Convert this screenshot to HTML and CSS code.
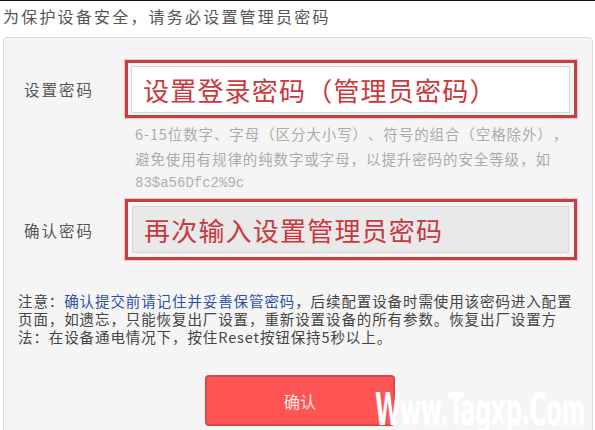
FILE: index.html
```html
<!DOCTYPE html>
<html lang="zh-CN">
<head>
<meta charset="utf-8">
<link rel="stylesheet" href="styles.css">
</head>
<body>
<div class="page">
  <div class="title">为保护设备安全，请务必设置管理员密码</div>
  <div class="panel">
    <div class="row">
      <div class="label">设置密码</div>
      <div class="mark">
        <div class="input white">设置登录密码（管理员密码）</div>
      </div>
    </div>
    <div class="hint">
      <div>6-15位数字、字母（区分大小写）、符号的组合（空格除外），</div>
      <div>避免使用有规律的纯数字或字母，以提升密码的安全等级，如</div>
      <div class="mono">83$a56Dfc2%9c</div>
    </div>
    <div class="row row2">
      <div class="label">确认密码</div>
      <div class="mark tall">
        <div class="input grey">再次输入设置管理员密码</div>
      </div>
    </div>
    <div class="note">
      <div>注意：<span class="link">确认提交前请记住并妥善保管密码</span>，后续配置设备时需使用该密码进入配置</div>
      <div>页面，如遗忘，只能恢复出厂设置，重新设置设备的所有参数。恢复出厂设置方</div>
      <div>法：在设备通电情况下，按住Reset按钮保持5秒以上。</div>
    </div>
    <div class="actions">
      <button class="btn">确认</button>
    </div>
  </div>
  <div class="watermark">Www.Tagxp.Com</div>
</div>
</body>
</html>
```
FILE: styles.css
```css
* { box-sizing: border-box; }
html, body { margin: 0; padding: 0; }
body {
  width: 595px;
  height: 430px;
  overflow: hidden;
  background: #fff;
  border-top: 1px solid #111;
  font-family: "Noto Sans CJK SC", "Noto Sans", sans-serif;
  text-spacing-trim: space-all;
}
.page { position: relative; height: 429px; }
.title {
  height: 36px;
  padding: 4px 0 0 3px;
  font-size: 16px;
  letter-spacing: 2.2px;
  line-height: 22px;
  color: #555;
}
.panel {
  margin-left: 3px;
  width: 590px;
  height: 420px;
  background: #f5f5f5;
  border: 1px solid #d9d9d9;
  border-radius: 4px;
  padding: 22px 0 0 20px;
}
.row { display: flex; align-items: center; }
.label {
  width: 101px;
  font-size: 15.5px;
  letter-spacing: 2px;
  color: #555;
}
.mark {
  width: 452px;
  height: 58px;
  border: 3px solid #c63e43;
  padding: 3px 4px 2px 3px;
  box-shadow: 0 0 1px 1px rgba(230, 120, 120, 0.35);
}
.mark.tall { height: 61px; padding: 4px 5px 4px 4px; }
.input {
  height: 100%;
  border: 1px solid #d6d6d6;
  padding-left: 11px;
  font-size: 26px;
  letter-spacing: 1.2px;
  line-height: 46px;
  color: #c8383d;
  white-space: nowrap;
}
.white { background: #fff; }
.grey { background: #e9e9e9; }
.hint {
  padding: 3px 0 0 111px;
  font-size: 14.5px;
  letter-spacing: 0.9px;
  line-height: 25px;
  color: #ababab;
  white-space: nowrap;
}
.mono {
  font-family: "Liberation Mono", "DejaVu Sans Mono", monospace;
  font-size: 14px;
  letter-spacing: 0;
  color: #b0b0b0;
}
.row2 { margin-top: 3px; }
.note {
  margin: 32px 0 0 -6px;
  font-size: 14.5px;
  letter-spacing: 0.9px;
  line-height: 18px;
  color: #444;
  white-space: nowrap;
}
.link { color: #2b4fa8; }
.actions { padding: 29px 0 0 181px; }
.btn {
  width: 190px;
  height: 51px;
  background: #ff5555;
  border: 2px solid #d84848;
  border-radius: 4px;
  color: #f8eaea;
  font-family: "Noto Sans CJK SC", sans-serif;
  font-size: 16px;
}
.watermark {
  position: absolute;
  left: 375px;
  top: 391px;
  font-family: "Liberation Sans Narrow", "DejaVu Sans Condensed", "Liberation Sans", sans-serif;
  font-weight: 700;
  font-size: 44px;
  line-height: 36px;
  letter-spacing: -1px;
  transform: scaleX(0.585);
  transform-origin: left;
  color: #fff;
  white-space: nowrap;
}
```
